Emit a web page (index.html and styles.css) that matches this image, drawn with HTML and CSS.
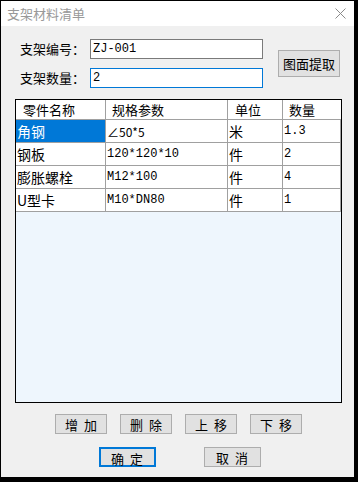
FILE: index.html
```html
<!DOCTYPE html>
<html lang="zh-CN">

<head>
  <meta charset="UTF-8">
  <meta name="viewport" content="width=device-width, initial-scale=1.0">
  <title>支架材料清单</title>
  <link rel="stylesheet" href="styles.css">
</head>

<body>

  <div class="dialog">
    <div class="titlebar">
      <span class="title">支架材料清单</span>
      <svg class="close" width="11" height="11" viewBox="0 0 11 11">
        <path d="M0.5 0.5 L10.5 10.5 M10.5 0.5 L0.5 10.5" stroke="#8a8a8a" stroke-width="1" fill="none" />
      </svg>
    </div>

    <div class="content">
      <div class="form">
        <div class="fields">
          <div class="field">
            <label>支架编号：</label>
            <div class="textbox">ZJ-001</div>
          </div>
          <div class="field">
            <label>支架数量：</label>
            <div class="textbox focused">2</div>
          </div>
        </div>
        <button class="btn extract">图面提取</button>
      </div>

      <div class="grid">
        <table>
          <tr class="head">
            <th class="c1">零件名称</th>
            <th class="c2">规格参数</th>
            <th class="c3">单位</th>
            <th class="c4">数量</th>
          </tr>
          <tr>
            <td class="selected">角钢</td>
            <td class="sans">∠50*5</td>
            <td>米</td>
            <td class="mono">1.3</td>
          </tr>
          <tr>
            <td>钢板</td>
            <td class="mono">120*120*10</td>
            <td>件</td>
            <td class="mono">2</td>
          </tr>
          <tr>
            <td>膨胀螺栓</td>
            <td class="mono">M12*100</td>
            <td>件</td>
            <td class="mono">4</td>
          </tr>
          <tr>
            <td>U型卡</td>
            <td class="mono">M10*DN80</td>
            <td>件</td>
            <td class="mono">1</td>
          </tr>
        </table>
      </div>

      <div class="actions">
        <button class="btn small">增加</button>
        <button class="btn small">删除</button>
        <button class="btn small">上移</button>
        <button class="btn small">下移</button>
      </div>

      <div class="actions confirm">
        <button class="btn wide default">确定</button>
        <button class="btn wide">取消</button>
      </div>
    </div>
  </div>

</body>

</html>
```

FILE: styles.css
```css
body {
  margin: 0;
  padding: 1px 0 0 1px;
  background-color: #000;
  font-family: "Noto Sans CJK SC", "Liberation Sans", sans-serif;
  font-size: 13px;
  color: #000;
}

.dialog {
  width: 353px;
  height: 476px;
  background-color: #f0f0f0;
  display: flex;
  flex-direction: column;
}

.titlebar {
  height: 25px;
  background-color: #fff;
  display: flex;
  align-items: center;
  justify-content: space-between;
  padding: 0 8px 0 6px;
}

.title {
  color: #999;
  font-size: 13px;
}

.content {
  display: flex;
  flex-direction: column;
}

/* 表单 */

.form {
  display: flex;
  align-items: center;
  padding: 13px 0 0 19px;
}

.fields {
  display: flex;
  flex-direction: column;
  gap: 9px;
}

.field {
  display: flex;
  align-items: center;
}

.field label {
  width: 70px;
  font-size: 13px;
  line-height: 20px;
}

.textbox {
  width: 169px;
  height: 18px;
  border: 1px solid #7a7a7a;
  background-color: #fff;
  padding-left: 2px;
  font-family: "Liberation Mono", monospace;
  font-size: 12px;
  line-height: 18px;
}

.textbox.focused {
  border-color: #0078d7;
}

.btn {
  background-color: #e1e1e1;
  border: 1px solid #adadad;
  font-family: "Noto Sans CJK SC", sans-serif;
  font-size: 13px;
  padding: 0;
  color: #000;
}

.extract {
  width: 62px;
  height: 27px;
  margin-left: 15px;
}

/* 列表 */

.grid {
  margin: 11px 0 0 14px;
  width: 325px;
  height: 302px;
  border: 1px solid #000;
  background-color: #eef6fd;
}

table {
  border-collapse: collapse;
  width: 325px;
  table-layout: fixed;
}

th,
td {
  padding: 0 0 0 1px;
  text-align: left;
  white-space: nowrap;
  overflow: hidden;
  background-color: #fff;
}

th {
  height: 19px;
  font-weight: normal;
  font-size: 13px;
  border-left: 1px solid #a0a0a0;
  border-bottom: 1px solid #a0a0a0;
  padding-left: 7px;
}

th.c1 {
  width: 82px;
  border-left: none;
}

th.c2 {
  width: 115px;
  padding-left: 6px;
}

th.c3 {
  width: 47px;
}

th.c4 {
  padding-left: 6px;
}

td {
  height: 22px;
  font-size: 14px;
  border: 1px solid #a0a0a0;
  border-top: none;
}

tr td:first-child {
  border-left: none;
}

td.selected {
  background-color: #0078d7;
  color: #fff;
}

td.mono {
  font-family: "Liberation Mono", monospace;
  font-size: 12px;
}

td.sans {
  font-size: 12px;
}

/* 按钮 */

.actions {
  display: flex;
  justify-content: center;
  gap: 13px;
  margin-top: 11px;
  padding-left: 2px;
}

.small {
  width: 52px;
  height: 20px;
  letter-spacing: 6px;
  text-indent: 6px;
}

.confirm {
  gap: 48px;
  margin-top: 13px;
  padding-left: 4px;
}

.wide {
  width: 57px;
  height: 20px;
  letter-spacing: 6px;
  text-indent: 6px;
}

.default {
  border: 2px solid #0078d7;
}
```
